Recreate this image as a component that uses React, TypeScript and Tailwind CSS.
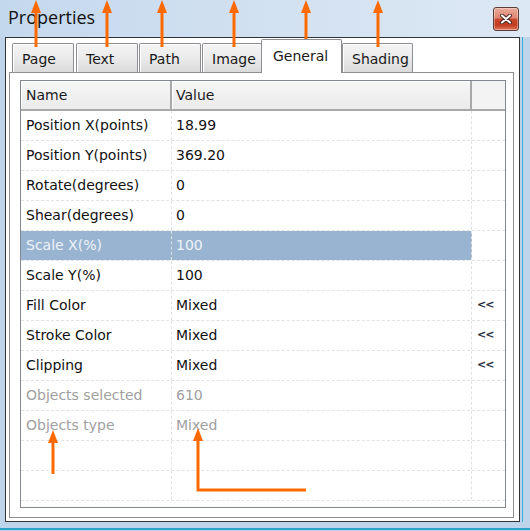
import React from "react";

type Row = {
  name: string;
  value: string;
  selected?: boolean;
  disabled?: boolean;
  more?: boolean;
};

const rows: Row[] = [
  { name: "Position X(points)", value: "18.99" },
  { name: "Position Y(points)", value: "369.20" },
  { name: "Rotate(degrees)", value: "0" },
  { name: "Shear(degrees)", value: "0" },
  { name: "Scale X(%)", value: "100", selected: true },
  { name: "Scale Y(%)", value: "100" },
  { name: "Fill Color", value: "Mixed", more: true },
  { name: "Stroke Color", value: "Mixed", more: true },
  { name: "Clipping", value: "Mixed", more: true },
  { name: "Objects selected", value: "610", disabled: true },
  { name: "Objects type", value: "Mixed", disabled: true },
  { name: "", value: "" },
  { name: "", value: "" },
];

const inactiveTab =
  "h-[29px] flex items-center pl-[9px] pt-[2px] border border-b-0 border-[#8c8e94] rounded-t-[2px] bg-gradient-to-b from-[#f4f4f4] via-[#ebebeb] to-[#dadada] shadow-[inset_1px_1px_0_#ffffff] text-[14px] text-[#1a1a1a]";

// orange callout arrows laid over the dialog
function UpArrow({ x, tip, end }: { x: number; tip: number; end: number }) {
  return (
    <g>
      <line x1={x} y1={tip + 10} x2={x} y2={end} stroke="#ff6a00" strokeWidth={3} />
      <polygon points={`${x},${tip} ${x - 5},${tip + 13} ${x + 5},${tip + 13}`} fill="#ff6a00" />
    </g>
  );
}

export default function App() {
  return (
    <div
      className="relative w-[530px] h-[531px] overflow-hidden flex flex-col bg-[#bed4eb]"
      style={{ fontFamily: '"DejaVu Sans", Verdana, sans-serif' }}
    >
      {/* title bar */}
      <div className="h-[37px] flex items-start justify-between bg-gradient-to-r from-[#c4d8ed] via-[#d2e1f1] to-[#dce8f4]">
        <span
          className="ml-[8px] mt-[4px] text-[18px] text-[#111]"
          style={{ fontFamily: '"Open Sans", "Noto Sans", sans-serif' }}
        >
          Properties
        </span>
        <button
          type="button"
          className="mt-[7px] mr-[11px] w-[26px] h-[24px] flex items-center justify-center rounded-[3px] border border-[#5e3d37] bg-[linear-gradient(#eaab9b_0%,#de8570_45%,#c9472b_52%,#c23b1f_78%,#e07a60_100%)] shadow-[inset_0_0_0_1px_rgba(255,255,255,0.35)]"
        >
          <svg width="12" height="10" viewBox="0 0 12 10">
            <path d="M2 1.5 L10 8.5 M10 1.5 L2 8.5" stroke="#4a2a25" strokeWidth={4} strokeLinecap="round" />
            <path d="M2 1.5 L10 8.5 M10 1.5 L2 8.5" stroke="#ffffff" strokeWidth={2} strokeLinecap="round" />
          </svg>
        </button>
      </div>

      {/* client area */}
      <div className="flex h-[485px]">
        <div className="ml-[5px] w-[515px] border border-[#333] bg-white flex flex-col pt-px pl-[3px] pr-[5px] pb-[3px]">
          <div className="h-[33px] flex items-end pl-[3px]">
            <div className={`${inactiveTab} w-[62px]`}>Page</div>
            <div className={`${inactiveTab} w-[62px] ml-[2px]`}>Text</div>
            <div className={`${inactiveTab} w-[62px] ml-px`}>Path</div>
            <div className={`${inactiveTab} w-[60px] ml-px`}>Image</div>
            <div className="relative z-10 -mb-px -ml-px h-[34px] w-[81px] flex items-center pl-[11px] pb-[1px] border border-b-0 border-[#8c8e94] rounded-t-[2px] bg-white text-[14px] text-[#1a1a1a]">
              General
            </div>
            <div className={`${inactiveTab} w-[71px] pl-[6px]`}>Shading</div>
          </div>

          <div className="flex-1 border border-[#8e8f93] bg-white pt-[7px] pl-[10px] pr-[7px] pb-[9px]">
            <div className="h-full border border-[#828790] flex flex-col overflow-hidden">
              {/* header */}
              <div className="h-[30px] flex shrink-0 border-b-2 border-[#a9a9a9] bg-gradient-to-b from-[#f6f6f6] to-[#ebebeb] text-[14px] text-[#1a1a1a]">
                <div className="w-[151px] flex items-center pl-[5px] border-r-2 border-[#a8a8a8] shadow-[inset_1px_1px_0_#ffffff]">
                  Name
                </div>
                <div className="w-[300px] flex items-center pl-[4px] border-r-2 border-[#a8a8a8] shadow-[inset_1px_1px_0_#ffffff]">
                  Value
                </div>
                <div className="flex-1 bg-[#f3f3f3]" />
              </div>

              {rows.map((r, i) => {
                const text = r.selected
                  ? "text-[#eef3f8]"
                  : r.disabled
                    ? "text-[#a0a0a0]"
                    : "text-[#111]";
                const cellBg = r.selected ? "bg-[#99b4d1]" : "";
                return (
                  <div
                    key={i}
                    className={`h-[30px] shrink-0 flex border-b border-dashed border-[#e2e2e2] text-[14px] ${text}`}
                  >
                    <div className={`w-[151px] flex items-center pl-[5px] border-r border-dashed border-[#e2e2e2] ${cellBg}`}>
                      {r.name}
                    </div>
                    <div className={`w-[300px] flex items-center pl-[4px] border-r border-dashed border-[#e2e2e2] ${cellBg}`}>
                      {r.value}
                    </div>
                    <div className="flex-1 flex items-center pl-[5px] text-[11px] font-bold tracking-[-1px] text-[#283040]">
                      {r.more ? "<<" : ""}
                    </div>
                  </div>
                );
              })}
            </div>
          </div>
        </div>
        <div className="ml-[2px] w-px bg-[#3aaed0]" />
      </div>

      <div className="flex-1 flex flex-col justify-end">
        <div className="h-[2px] mb-[1px] bg-[#2fa3c6]" />
      </div>

      <svg className="absolute inset-0 pointer-events-none" width="530" height="531">
        <UpArrow x={36} tip={0} end={47} />
        <UpArrow x={107} tip={0} end={47} />
        <UpArrow x={162} tip={0} end={47} />
        <UpArrow x={234} tip={0} end={47} />
        <UpArrow x={306} tip={0} end={47} />
        <UpArrow x={378} tip={0} end={47} />
        <UpArrow x={53} tip={430} end={474} />
        <polygon points="198,428 193,441 203,441" fill="#ff6a00" />
        <polyline points="198,438 198,490 306,490" fill="none" stroke="#ff6a00" strokeWidth={3} />
      </svg>
    </div>
  );
}
